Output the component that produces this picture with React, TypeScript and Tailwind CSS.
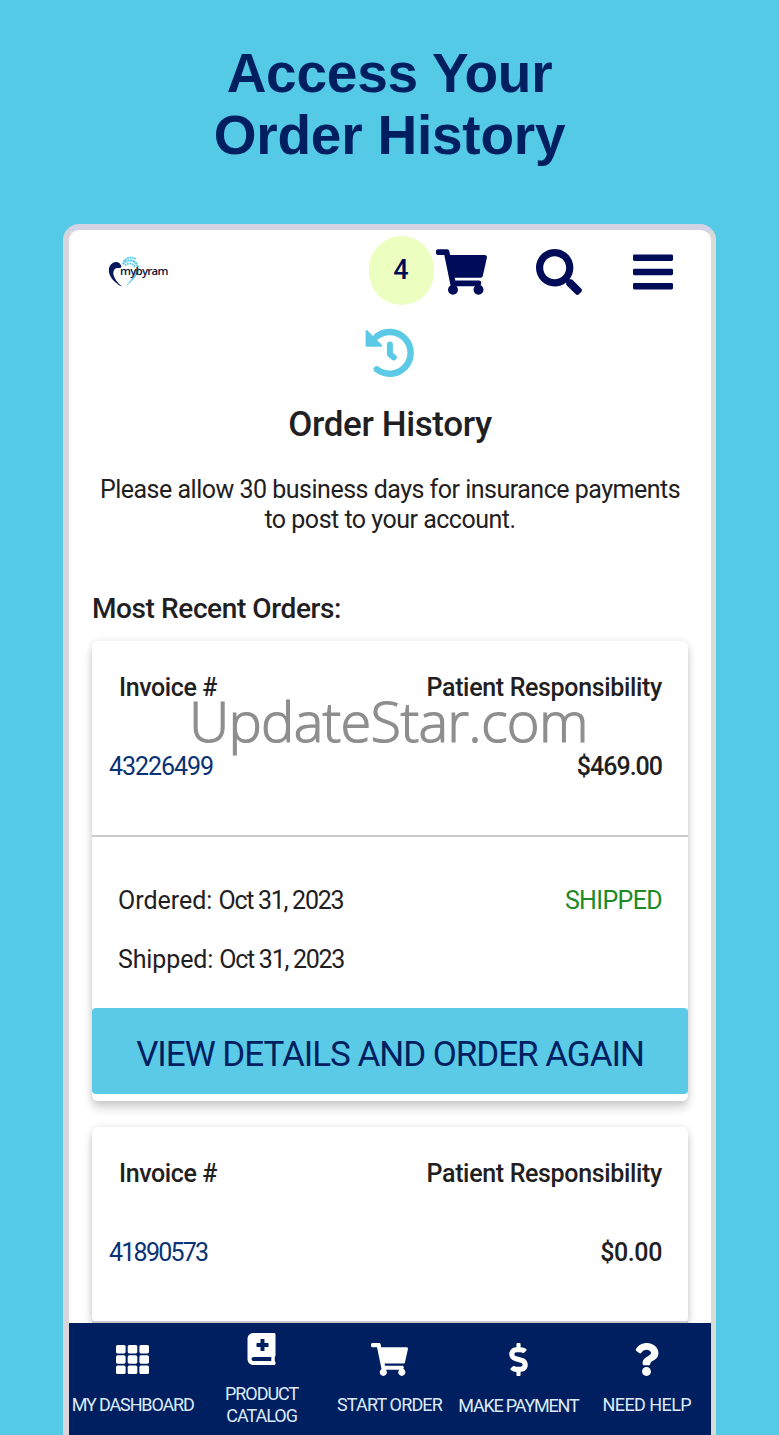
import React from 'react';
import {
  FaBars,
  FaBookMedical,
  FaDollarSign,
  FaQuestion,
  FaSearch,
  FaShoppingCart,
} from 'react-icons/fa';

interface Order {
  invoice: string;
  invoiceClass: string;
  amount: string;
  amountClass: string;
  details?: {
    ordered: string;
    shipped: string;
    status: string;
  };
}

const orders: Order[] = [
  {
    invoice: '43226499',
    invoiceClass: 'tracking-[-1.05px]',
    amount: '$469.00',
    amountClass: 'tracking-[-1px]',
    details: {
      ordered: 'Oct 31, 2023',
      shipped: 'Oct 31, 2023',
      status: 'SHIPPED',
    },
  },
  {
    invoice: '41890573',
    invoiceClass: 'tracking-[-1.75px]',
    amount: '$0.00',
    amountClass: 'tracking-[-0.4px]',
  },
];

const Logo: React.FC = () => (
  <div className="relative w-[60px] h-8 shrink-0">
    <svg viewBox="0 0 60 32" className="w-[60px] h-8" fill="none">
      <path
        d="M13.5 11C13 6.6 8.5 4.8 5 6.8C0.6 9.2 -0.2 14.6 2 19.4C4 23.6 8.6 28 14 30.6C9.6 26.6 6.2 22.6 5.4 18.4C4.8 14.4 7 12 9.8 12C11.4 12 12.8 12 13.5 11Z"
        fill="#06175c"
      />
      <path
        d="M14.8 8.4C17 4.4 23 3 26.6 6C30.6 9 31 14.4 28.2 19"
        stroke="#5ccbe9"
        strokeWidth="2.2"
        strokeDasharray="2.4 0.5"
      />
      <path
        d="M15.6 5.4C18 1.6 24 -0.2 28.4 3.6"
        stroke="#5ccbe9"
        strokeWidth="1.8"
        strokeDasharray="1.8 0.6"
      />
      <path d="M17 9.6C19.6 6.6 24.4 6.6 27 11" stroke="#5ccbe9" strokeWidth="1.8" strokeDasharray="1.8 0.7" />
      <path d="M30 14C29 20.6 23.6 26 17.2 30.6C22 25.6 26.2 20.6 27 14Z" fill="#5ccbe9" />
    </svg>
    <span className="absolute left-3 top-[7px] text-[11.5px] leading-4 tracking-[-0.78px] font-['Open_Sans',sans-serif] font-semibold text-[#14143c]">
      mybyram
    </span>
  </div>
);

const HistoryIcon: React.FC = () => (
  <svg viewBox="0 0 49 49" className="mt-[15px] -ml-px w-[49px] h-[49px] shrink-0 self-center text-[#5ccae6]" fill="none">
    <path d="M11.6 8.6A20.9 20.9 0 1 1 11.8 41.3" stroke="currentColor" strokeWidth="6.4" strokeLinecap="round" />
    <path d="M1.6 3L16.2 17.7H1.6Z" fill="currentColor" stroke="currentColor" strokeWidth="2" strokeLinejoin="round" />
    <path d="M24.9 16.4V26.2L28.8 29.4" stroke="currentColor" strokeWidth="6" strokeLinecap="round" strokeLinejoin="round" />
  </svg>
);

const GridIcon: React.FC = () => (
  <svg viewBox="0 0 33 29" className="w-[33px] h-[29px] -ml-[2px] text-white" fill="currentColor">
    {[0, 11.7, 23.4].map(x =>
      [0, 10.3, 20.6].map(y => <rect key={`${x}-${y}`} x={x} y={y} width="9.6" height="8.4" rx="1.6" />)
    )}
  </svg>
);

const OrderCard: React.FC<{ order: Order }> = ({ order }) => (
  <div className="shrink-0 rounded-md bg-white shadow-[0_7px_10px_rgba(0,0,0,0.17),0_0_7px_rgba(0,0,0,0.1)]">
    <div className="h-[194px] pt-8 pl-[27px] pr-[26px] font-medium">
      <div className="flex justify-between">
        <span className="tracking-[-0.4px]">Invoice #</span>
        <span className="tracking-[-0.34px]">Patient Responsibility</span>
      </div>
      <div className="flex justify-between mt-[49px]">
        <a className={`-ml-[10px] font-normal text-[#0a3376] ${order.invoiceClass}`}>{order.invoice}</a>
        <span className={order.amountClass}>{order.amount}</span>
      </div>
    </div>
    <div className="border-t-2 border-[#cbcbcb]">
      {order.details && (
        <div className="pb-[7px]">
          <div className="h-[171px] pt-[49px] pl-[26px] pr-[26px]">
            <div className="flex justify-between">
              <span>
                <span className="tracking-[-0.02px]">Ordered: </span>
                <span className="tracking-[-1.28px]">{order.details.ordered}</span>
              </span>
              <span className="tracking-[-0.65px] text-[#1d8a26]">{order.details.status}</span>
            </div>
            <div className="mt-[29px]">
              <span className="tracking-[-0.12px]">Shipped: </span>
              <span className="tracking-[-1.28px]">{order.details.shipped}</span>
            </div>
          </div>
          <button className="w-full h-[86px] rounded bg-[#5bcae7] text-[35px] leading-10 tracking-[-1.04px] pt-[7px] text-[#001f60] flex items-center justify-center">
            VIEW DETAILS AND ORDER AGAIN
          </button>
        </div>
      )}
    </div>
  </div>
);

export default function App() {
  return (
    <div className="relative w-[779px] h-[1435px] overflow-hidden bg-[#54cae6] flex flex-col items-center font-['Roboto',sans-serif] text-[#1f2022]">
      <h1 className="pt-[43px] text-[55px] leading-[61.5px] tracking-[-0.22px] font-bold text-center text-[#001f60] font-['Liberation_Sans',sans-serif]">
        Access Your
        <br />
        Order History
      </h1>

      <div className="mt-[58px] w-[653px] flex-1 min-h-0 flex flex-col rounded-t-2xl border-t-[6px] border-l-[6px] border-r-[5px] border-t-[#d4d3e6] border-l-[#d8d6dc] border-r-[#d8dad8] bg-white overflow-hidden">
        <header className="h-[83px] shrink-0 flex items-center pl-[39px] pr-[38px] text-[#000c57]">
          <Logo />
          <div className="ml-[201px] -mt-[2px] w-[65px] h-[69px] rounded-full bg-[#ecffc0] flex items-center justify-center text-[27px] font-medium">
            <span className="-mt-px -ml-px">4</span>
          </div>
          <FaShoppingCart className="ml-[2px] w-[51px] h-[46px]" />
          <FaSearch className="ml-[49px] w-[46px] h-[46px]" />
          <FaBars className="ml-[51px] w-10 h-[46px]" />
        </header>

        <main className="flex-1 min-h-0 overflow-hidden flex flex-col px-[23px] text-[25px] leading-[30px]">
          <HistoryIcon />
          <h2 className="mt-7 text-[35px] leading-10 tracking-[-0.38px] font-medium text-center">Order History</h2>
          <p className="mt-[30px] text-center tracking-[-0.5px]">
            Please allow 30 business days for insurance payments
            <br />
            to post to your account.
          </p>
          <h3 className="mt-14 text-[28px] leading-9 tracking-[-0.4px] font-medium">Most Recent Orders:</h3>
          <div className="mt-[14px] flex flex-col gap-[26px] w-[596px]">
            {orders.map(order => (
              <OrderCard key={order.invoice} order={order} />
            ))}
          </div>
        </main>

        <nav className="h-28 shrink-0 grid grid-cols-5 bg-[#001f60] text-lg leading-[21.5px] text-center text-[#dcebfa] whitespace-nowrap">
          <a className="flex flex-col items-center pt-[22px]">
            <GridIcon />
            <span className="mt-[20px] -ml-px tracking-[-1.15px]">MY DASHBOARD</span>
          </a>
          <a className="flex flex-col items-center pt-[10px]">
            <FaBookMedical className="w-[29px] h-8 text-white" />
            <span className="mt-[18px] tracking-[-1.05px]">
              PRODUCT
              <br />
              CATALOG
            </span>
          </a>
          <a className="flex flex-col items-center pt-[20px]">
            <FaShoppingCart className="w-[37px] h-[33px] text-white" />
            <span className="mt-[18px] -ml-px tracking-[-0.85px]">START ORDER</span>
          </a>
          <a className="flex flex-col items-center pt-[20px]">
            <FaDollarSign className="w-[33px] h-[33px] text-white" />
            <span className="mt-[19px] tracking-[-1.2px]">MAKE PAYMENT</span>
          </a>
          <a className="flex flex-col items-center pt-[20px]">
            <FaQuestion className="w-[33px] h-[33px] text-white" />
            <span className="mt-[18px] tracking-[-0.55px]">NEED HELP</span>
          </a>
        </nav>
      </div>

      {/* watermark */}
      <span className="absolute left-[189px] top-[680px] text-[56px] leading-[80px] tracking-[-0.75px] font-light [-webkit-text-stroke:1.2px_#8e8e8e] font-['Open_Sans',sans-serif] text-[#8e8e8e] pointer-events-none">
        UpdateStar.com
      </span>
    </div>
  );
}
